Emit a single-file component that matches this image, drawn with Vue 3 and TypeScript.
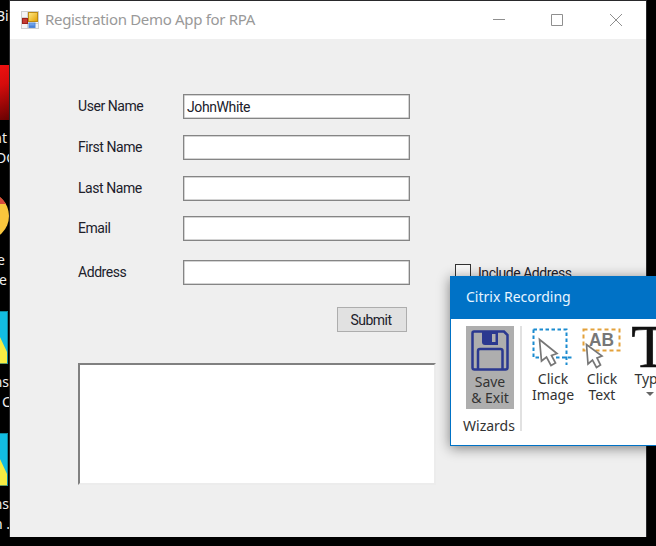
<script setup lang="ts">
import { ref } from 'vue'

interface Field {
  id: string
  label: string
  value: string
}

const fields = ref<Field[]>([
  { id: 'user', label: 'User Name', value: 'JohnWhite' },
  { id: 'first', label: 'First Name', value: '' },
  { id: 'last', label: 'Last Name', value: '' },
  { id: 'email', label: 'Email', value: '' },
  { id: 'address', label: 'Address', value: '' },
])
</script>

<template>
  <div class="desktop">
    <span class="cap c1">Bi</span>
    <div class="shortcut red"></div>
    <span class="cap c2">nt</span>
    <span class="cap c3">DC</span>
    <svg class="shortcut chrome" width="10" height="50" viewBox="0 0 10 50">
      <circle cx="-15" cy="25" r="24" fill="#f9c63d" />
      <path d="M-15 1A24 24 0 0 1 6 13H-15z" fill="#d84a3c" />
    </svg>
    <span class="cap c4">e</span>
    <span class="cap c5">e</span>
    <svg v-for="n in 2" :key="n" class="shortcut tile" :class="'tile' + n" width="8" height="53" viewBox="0 0 8 53">
      <rect width="8" height="53" fill="#12bde2" />
      <path d="M0 26L7 41V53H0z" fill="#f5ec43" />
      <path d="M0 .5H7.500V52.500H0" fill="none" stroke="#0a6270" stroke-opacity=".6" />
    </svg>
    <span class="cap c6">ms</span>
    <span class="cap c7">C</span>
    <span class="cap c8">ms</span>
    <span class="cap c9">n .</span>

    <section class="window">
      <header class="titlebar">
        <svg class="app-icon" width="18" height="18" viewBox="0 0 18 18">
          <defs>
            <linearGradient id="gold" x2="1" y2="1"><stop stop-color="#ffeb8a" /><stop offset="1" stop-color="#e3a000" /></linearGradient>
            <linearGradient id="blue" x2="0" y2="1"><stop stop-color="#8ab9f5" /><stop offset="1" stop-color="#3973cf" /></linearGradient>
          </defs>
          <rect x=".5" y=".5" width="17" height="17" fill="#f4f4f4" stroke="#cfcfcf" />
          <path d="M6.500 1V17M1 6.500H7M1 12.500H17M12.500 12V17" stroke="#d2d2d2" />
          <rect x="7.500" y="1.500" width="9" height="9" fill="url(#gold)" stroke="#bd8b12" />
          <rect x="1.500" y="7.500" width="5" height="5" fill="#c63b32" stroke="#9d221c" />
          <rect x="8" y="12" width="6" height="4.500" fill="url(#blue)" stroke="#5289d8" />
        </svg>
        <h1>Registration Demo App for RPA</h1>
        <svg class="controls" width="132" height="14" viewBox="0 0 132 14" fill="none" stroke="#8f8f8f">
          <path d="M0 6.500H12M58.500 1.500H69.500V12.500H58.500zM117 1L129 13M129 1L117 13" />
        </svg>
      </header>

      <form class="form" @submit.prevent>
        <div class="top">
          <div class="fields">
            <div v-for="f in fields" :key="f.id" class="row" :class="f.id">
              <label :for="f.id">{{ f.label }}</label>
              <input :id="f.id" v-model="f.value" type="text" />
            </div>
          </div>
          <label class="include"><span class="box"></span><span>Include Address</span></label>
        </div>
        <button class="submit" type="submit"><span>Submit</span></button>
        <div class="output"></div>
      </form>
    </section>

    <section class="recorder">
      <header>Citrix Recording</header>
      <div class="ribbon">
        <div class="group">
          <div class="save">
            <svg width="38" height="41" viewBox="0 0 38 41">
              <path d="M3 1.500H33L36.500 5V37.500Q36.500 39.500 34.500 39.500H3.500Q1.500 39.500 1.500 37.500V3Q1.500 1.500 3 1.500z" fill="none" stroke="#2b3990" stroke-width="2.500" />
              <path d="M11 1H27V15H14Q11 15 11 12z" fill="#2b3990" />
              <rect x="21" y="4" width="3.500" height="8" fill="#b0b0b0" />
              <path d="M7 39V21Q7 19 9 19H29.500Q31.500 19 31.500 21V39" fill="none" stroke="#2b3990" stroke-width="2.500" />
            </svg>
            <span>Save</span>
            <span>&amp; Exit</span>
          </div>
          <div class="group-name">Wizards</div>
        </div>
        <div class="divider"></div>
        <div class="tool image">
          <svg width="42" height="42" viewBox="0 0 42 42" fill="none">
            <path d="M1.500 1.500H34.500V37M1.500 1.500V29.500H8M24 29.500H41" stroke="#1b8bd0" stroke-width="2" stroke-dasharray="3.500 2.500" />
            <path d="M7.500 11.500L9.500 33L14.500 29L19 37.500L23.500 35L19.500 27.500L25 25.500z" fill="#fff" stroke="#777" stroke-width="1.700" />
          </svg>
          <span>Click</span>
          <span>Image</span>
        </div>
        <div class="tool text">
          <svg width="42" height="42" viewBox="0 0 42 42" fill="none">
            <rect x="2.500" y="1.500" width="36" height="21" stroke="#e3a13b" stroke-width="2" stroke-dasharray="4 3" />
            <text x="8" y="18" class="ab" textLength="25" lengthAdjust="spacingAndGlyphs">AB</text>
            <path d="M5.500 16.500L7 36L11.500 32L15.500 39.500L19.500 37L16 30L21 28z" fill="#fff" stroke="#777" stroke-width="1.700" />
          </svg>
          <span>Click</span>
          <span>Text</span>
        </div>
        <div class="tool type">
          <div class="big-t">T</div>
          <span>Type</span>
          <i class="arrow"></i>
        </div>
      </div>
    </section>
  </div>
</template>

<style>
body { overflow: hidden; background: #000; }
</style>

<style scoped>
* { box-sizing: border-box; }
.desktop { position: relative; width: 656px; height: 546px; overflow: hidden; background: #000; font-family: "Noto Sans", sans-serif; }
.cap { position: absolute; color: #eee; font: 14px/18px "Noto Sans", sans-serif; white-space: nowrap; }
.c1 { left: -4px; top: 7px; }
.c2 { right: 649px; top: 129px; }
.c3 { left: -4px; top: 149px; }
.c4 { right: 651px; top: 251px; }
.c5 { right: 649px; top: 271px; }
.c6 { right: 647px; top: 373px; }
.c7 { left: 2px; top: 393px; }
.c8 { right: 647px; top: 495px; }
.c9 { right: 646px; top: 515px; }
.shortcut { position: absolute; left: 0; }
.red { top: 65px; width: 10px; height: 55px; background: linear-gradient(155deg, #ee1010, #d50c0c 35%, #650202); }
.chrome { top: 191px; }
.tile1 { top: 311px; }
.tile2 { top: 433px; }

.window { position: absolute; left: 9px; top: 0; width: 638px; height: 537px; border: 1px solid #29292b; border-bottom: 0; background: #efefef; }
.titlebar { display: flex; align-items: center; height: 38px; padding-left: 11px; background: #fff; }
.app-icon { flex: none; }
h1 { margin: -2px 0 0 6px; flex: 1; color: #999; font: 400 15px/20px "Noto Sans", sans-serif; letter-spacing: -.32px; white-space: nowrap; }
.controls { margin-right: 21px; flex: none; }

.form { display: flex; flex-direction: column; padding: 55px 0 0 68px; font: 14px/16px Roboto, sans-serif; letter-spacing: -.45px; color: #20202a; }
.top { display: flex; align-items: flex-end; gap: 45px; }
.row { display: grid; grid-template-columns: 105px 227px; height: 25px; margin-bottom: 16px; }
.row.last { margin-bottom: 15px; }
.row.email { margin-bottom: 19px; }
.row.address { margin-bottom: 0; }
.row label { padding-top: 4px; }
.row input { margin: 0; height: 25px; padding: 0 3px; border: 1px solid #858585; border-radius: 0; outline: 0; background: #fff; color: #20202a; font: 14px/16px Roboto, sans-serif; letter-spacing: -.4px; box-shadow: inset 0 0 0 .5px #aaa; }
.include { display: flex; gap: 7px; height: 21px; white-space: nowrap; }
.include span:last-child { padding-top: 1px; }
.box { width: 16px; height: 16px; border: 1px solid #333; background: #f8f8f8; }
.submit { width: 70px; height: 25px; margin: 22px 0 0 259px; padding: 0 2px 0 0; border: 1px solid #adadad; border-radius: 0; background: #e1e1e1; color: #20202a; font: 14px/16px Roboto, sans-serif; letter-spacing: -.5px; }
.output { width: 358px; height: 122px; margin-top: 31px; background: #fff; border: 2px solid #808080; border-right-color: #ececec; border-bottom-color: #ececec; outline: 0; }

.recorder { position: absolute; left: 450px; top: 276px; width: 240px; height: 170px; border: 1px solid #0072c6; background: #fff; color: #333; box-shadow: 0 2px 12px rgba(0, 0, 0, .48); }
.recorder > header { height: 42px; padding-left: 15px; background: #0072c6; color: #e8f5ff; font-size: 14px; line-height: 40px; }
.ribbon { display: flex; height: 126px; padding: 7px 0 0 11px; font-size: 14px; line-height: 16px; }
.group { width: 56px; }
.save { display: flex; flex-direction: column; align-items: center; width: 48px; height: 83px; margin-left: 4px; padding-top: 4px; background: #aeaeae; white-space: nowrap; }
.save svg { margin-bottom: 3px; flex: none; }
.group-name { width: 54px; margin-top: 9px; text-align: center; }
.divider { width: 2px; height: 105px; margin-left: 2px; background: #e1e1e1; }
.tool { display: flex; flex-direction: column; align-items: center; width: 48px; white-space: nowrap; }
.tool svg { margin: 2px 0 1px; flex: none; }
.image { margin-left: 7px; }
.text { margin-left: 1px; }
.ab { fill: #777; font: 700 19px "Liberation Sans", sans-serif; }
.type { margin-left: 0; }
.big-t { height: 45px; color: #111; font: 61px/42px "Liberation Serif", serif; -webkit-text-stroke: .6px #111; }
.arrow { margin-top: 5px; border: 4px solid transparent; border-top: 4px solid #666; border-bottom: 0; }
</style>
